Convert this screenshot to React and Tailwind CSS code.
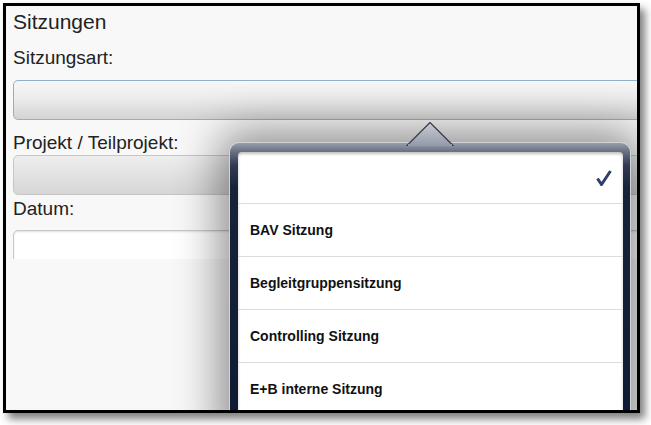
import React from 'react';

// one row of the popover list
const OptionRow = ({ label }) => (
  <div className="h-[53px] flex items-center pl-[12px] pr-[11px] border-b border-[#dcdcdc]">
    <span className="text-[14px] font-bold text-[#111]">{label}</span>
  </div>
);

const options = ['BAV Sitzung', 'Begleitgruppensitzung', 'Controlling Sitzung', 'E+B interne Sitzung'];

const App = () => (
  <div className="w-[651px] h-[425px] bg-white pt-[3px] pl-[3px] font-['Liberation_Sans',Arial,sans-serif]">
    <div className="relative w-[637px] h-[410px] border-[3px] border-black bg-[#f8f8f8] overflow-hidden shadow-[5px_6px_8px_rgba(0,0,0,0.5)]">
      {/* form */}
      <div className="pl-[7px] pt-[4px] -mr-[8px]">
        <h1 className="text-[21px] leading-[24px] text-[#222]">Sitzungen</h1>
        <p className="mt-[13px] text-[19px] leading-[22px] text-[#222]">Sitzungsart:</p>
        <div className="mt-[11px] h-[40px] rounded-[5px] border border-[#8fb1c9] bg-[linear-gradient(to_bottom,#f7f7f7,#ececec_45%,#d3d3d3)]" />
        <p className="mt-[12px] text-[19px] leading-[22px] text-[#222]">Projekt / Teilprojekt:</p>
        <div className="mt-[1px] h-[40px] rounded-[5px] border border-[#c6c6c6] bg-[linear-gradient(to_bottom,#eeeeee,#e2e2e2_50%,#d6d6d6)]" />
        <p className="mt-[3px] text-[19px] leading-[22px] text-[#222]">Datum:</p>
        <div className="mt-[10px] h-[29px] overflow-hidden">
          <div className="h-[40px] rounded-[5px] border border-[#c8c8c8] bg-white shadow-[inset_0_1px_2px_rgba(0,0,0,0.12)]" />
        </div>
      </div>

      {/* popover over the form */}
      <div className="absolute left-[224px] top-[116px] w-[400px]">
        <svg width="48" height="24" viewBox="0 0 48 24" className="absolute left-[176px] top-0 z-10">
          <defs>
            <linearGradient id="arrowFill" x1="0" y1="0" x2="0" y2="1">
              <stop offset="0" stopColor="#c9ccd4" />
              <stop offset="1" stopColor="#959bab" />
            </linearGradient>
          </defs>
          <polygon points="1,23.5 24,0.5 47,23.5" fill="url(#arrowFill)" stroke="#3b3f48" strokeWidth="1.3" />
          <rect x="2" y="22" width="44" height="2" fill="#969cab" />
        </svg>
        <div className="mt-[21px] h-[300px] rounded-[9px] pt-[9px] pl-[8px] pr-[7px] ring-1 ring-[#d0d3d8] bg-[linear-gradient(to_bottom,#989eab_0px,#6c7385_8px,#323b52_22px,#18223b_45px,#0e1a33)] shadow-[0_0_45px_10px_rgba(0,0,0,0.45)]">
          <div className="h-full rounded-t-[4px] bg-white overflow-hidden shadow-[inset_0_2px_3px_rgba(0,0,0,0.25)]">
            <div className="h-[52px] flex items-center justify-end pr-[11px] border-b border-[#dcdcdc]">
              <svg width="16" height="16" viewBox="0 0 16 16" className="mt-[1px]">
                <path d="M1.5 8.5 L5.5 14.5 L14.5 1" fill="none" stroke="#2e3f6c" strokeWidth="3" />
              </svg>
            </div>
            {options.map((o) => (
              <OptionRow key={o} label={o} />
            ))}
          </div>
        </div>
      </div>
    </div>
  </div>
);

export default App;
